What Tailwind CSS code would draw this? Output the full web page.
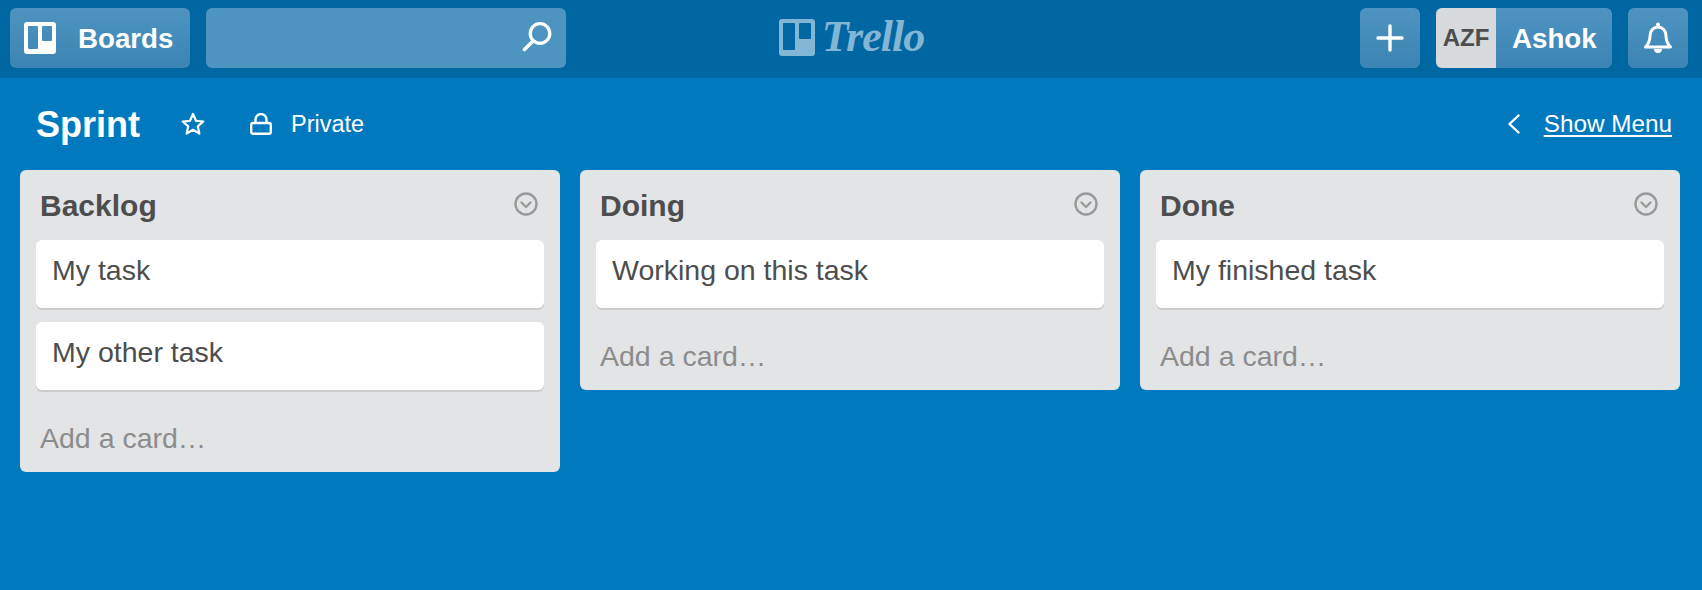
<!DOCTYPE html>
<html lang="en">
<head>
    <meta charset="UTF-8">
    <title>Sprint | Trello</title>
    <script src="https://cdn.jsdelivr.net/npm/@tailwindcss/browser@4"></script>
</head>
<body class="bg-[#0079bf] h-[590px] overflow-hidden font-['Liberation_Sans',Arial,sans-serif] text-white">

    <!-- Top bar -->
    <header class="grid grid-cols-[1fr_auto_1fr] items-start h-[78px] pt-[8px] pl-[10px] pr-[14px] bg-[#0067a3]">
        <div class="flex gap-[16px]">
            <a class="flex items-center w-[180px] h-[60px] rounded-[6px] bg-gradient-to-b from-[#4d94c1] to-[#3c84b3]">
                <svg class="ml-[14px] w-[32px] h-[32px]" viewBox="0 0 32 32">
                    <path fill="#fff" fill-rule="evenodd" d="M3 0h26a3 3 0 0 1 3 3v26a3 3 0 0 1-3 3H3a3 3 0 0 1-3-3V3a3 3 0 0 1 3-3zM5 4a1 1 0 0 0-1 1v21a1 1 0 0 0 1 1h8a1 1 0 0 0 1-1V5a1 1 0 0 0-1-1zM19 4a1 1 0 0 0-1 1v13a1 1 0 0 0 1 1h8a1 1 0 0 0 1-1V5a1 1 0 0 0-1-1z"/>
                </svg>
                <span class="ml-[22px] mt-[1px] text-[27.700px] font-bold">Boards</span>
            </a>
            <div class="flex items-center justify-end w-[360px] h-[60px] pr-[14px] rounded-[6px] bg-[#4d94c1]">
                <svg class="mb-[2px] w-[30px] h-[30px]" viewBox="0 0 30 30" fill="none" stroke="#fff">
                    <circle cx="18" cy="11.500" r="9.800" stroke-width="3.200"/>
                    <path d="M10.500 19.500l-8 8" stroke-width="3.600" stroke-linecap="round"/>
                </svg>
            </div>
        </div>

        <!-- Logo -->
        <div class="flex items-center gap-[7px] ml-[5px] mt-[-1px] h-[60px] text-[#83b5d5]">
            <svg class="w-[36px] h-[37px]" viewBox="0 0 36 37">
                <path fill="#83b5d5" fill-rule="evenodd" d="M3 0h30a3 3 0 0 1 3 3v31a3 3 0 0 1-3 3H3a3 3 0 0 1-3-3V3a3 3 0 0 1 3-3zM5 4a1 1 0 0 0-1 1v25a1 1 0 0 0 1 1h10a1 1 0 0 0 1-1V5a1 1 0 0 0-1-1zM21 4a1 1 0 0 0-1 1v14a1 1 0 0 0 1 1h10a1 1 0 0 0 1-1V5a1 1 0 0 0-1-1z"/>
            </svg>
            <span class="font-['Liberation_Serif',serif] italic font-bold text-[44px] leading-[46px] tracking-[-1px]">Trello</span>
        </div>

        <div class="flex justify-end gap-[16px]">
            <a class="flex items-center justify-center w-[60px] h-[60px] rounded-[6px] bg-gradient-to-b from-[#4d94c1] to-[#3c84b3]">
                <svg class="w-[28px] h-[28px]" viewBox="0 0 28 28" stroke="#fff" stroke-width="3.400" stroke-linecap="round">
                    <path d="M2 14h24M14 2v24"/>
                </svg>
            </a>
            <a class="flex items-center w-[176px] h-[60px] rounded-[6px] overflow-hidden bg-gradient-to-b from-[#4d94c1] to-[#3c84b3]">
                <span class="flex items-center justify-center w-[60px] h-[60px] bg-[#d6dadc] text-[#4d4d4d] text-[24px] font-bold">AZF</span>
                <span class="ml-[16px] mt-[1px] text-[27.700px] font-bold">Ashok</span>
            </a>
            <a class="flex items-center justify-center w-[60px] h-[60px] rounded-[6px] bg-gradient-to-b from-[#4d94c1] to-[#3c84b3]">
                <svg class="w-[30px] h-[32px]" viewBox="0 0 30 32" fill="none" stroke="#fff" stroke-width="3" stroke-linejoin="round">
                    <path d="M2.500 25c3-3 4.500-6 4.500-11 0-5.500 3.500-9 8-9s8 3.500 8 9c0 5 1.500 8 4.500 11z"/>
                    <circle cx="15" cy="2.500" r="2" fill="#fff" stroke="none"/>
                    <path d="M11 27a4 4 0 0 0 8 0z" fill="#fff" stroke="none"/>
                </svg>
            </a>
        </div>
    </header>

    <!-- Board title row -->
    <div class="flex items-center h-[92px] pl-[36px] pr-[30px]">
        <h1 class="mt-[2px] text-[36px] font-bold">Sprint</h1>
        <svg class="ml-[41px] w-[24px] h-[24px]" viewBox="0 0 24 24" fill="none" stroke="#fff" stroke-width="2.200" stroke-linejoin="round">
            <path d="M12 2l3 6.800 7.300.7-5.500 4.900 1.600 7.200L12 17.800l-6.400 3.800 1.600-7.200L1.700 9.500 9 8.800z"/>
        </svg>
        <svg class="ml-[45px] w-[22px] h-[22px]" viewBox="0 0 22 22" fill="none" stroke="#fff" stroke-width="2.400">
            <path d="M5.500 10V6.500a5.500 5.500 0 0 1 11 0V10"/>
            <rect x="1.200" y="10" width="19.600" height="10.800" rx="2"/>
        </svg>
        <span class="ml-[19px] mt-[2px] text-[23.500px]">Private</span>
        <svg class="ml-auto w-[12px] h-[20px]" viewBox="0 0 12 20" fill="none" stroke="#fff" stroke-width="2.400" stroke-linecap="round" stroke-linejoin="round">
            <path d="M10.500 1.500L1.500 10l9 8.500"/>
        </svg>
        <a class="ml-[24px] text-[24.300px] underline decoration-2 underline-offset-[3px]">Show Menu</a>
    </div>

    <!-- Lists -->
    <main class="flex items-start gap-[20px] px-[20px]">
        <section class="w-[540px] rounded-[6px] bg-[#e2e4e6] text-[#4d4d4d]">
            <div class="flex items-center justify-between h-[70px] pl-[20px] pr-[22px]">
                <h2 class="text-[30px] font-bold">Backlog</h2>
                <svg class="mb-[2px] w-[24px] h-[24px]" viewBox="0 0 24 24" fill="none" stroke="#999" stroke-width="2.400" stroke-linecap="round" stroke-linejoin="round">
                    <circle cx="12" cy="12" r="10.500"/>
                    <path d="M7.500 10.500l4.500 4.500 4.500-4.500"/>
                </svg>
            </div>
            <div class="flex flex-col gap-[14px] px-[16px]">
                <div class="h-[68px] pl-[16px] pt-[12px] rounded-[6px] bg-white shadow-[0_2px_0_#ccc] text-[28.500px] leading-[36px]">My task</div>
                <div class="h-[68px] pl-[16px] pt-[12px] rounded-[6px] bg-white shadow-[0_2px_0_#ccc] text-[28.500px] leading-[36px]">My other task</div>
            </div>
            <div class="h-[82px] pl-[20px] pt-[30px] text-[#8c8c8c] text-[28.500px] leading-[36px]">Add a card…</div>
        </section>

        <section class="w-[540px] rounded-[6px] bg-[#e2e4e6] text-[#4d4d4d]">
            <div class="flex items-center justify-between h-[70px] pl-[20px] pr-[22px]">
                <h2 class="text-[30px] font-bold">Doing</h2>
                <svg class="mb-[2px] w-[24px] h-[24px]" viewBox="0 0 24 24" fill="none" stroke="#999" stroke-width="2.400" stroke-linecap="round" stroke-linejoin="round">
                    <circle cx="12" cy="12" r="10.500"/>
                    <path d="M7.500 10.500l4.500 4.500 4.500-4.500"/>
                </svg>
            </div>
            <div class="flex flex-col gap-[14px] px-[16px]">
                <div class="h-[68px] pl-[16px] pt-[12px] rounded-[6px] bg-white shadow-[0_2px_0_#ccc] text-[28.500px] leading-[36px]">Working on this task</div>
            </div>
            <div class="h-[82px] pl-[20px] pt-[30px] text-[#8c8c8c] text-[28.500px] leading-[36px]">Add a card…</div>
        </section>

        <section class="w-[540px] rounded-[6px] bg-[#e2e4e6] text-[#4d4d4d]">
            <div class="flex items-center justify-between h-[70px] pl-[20px] pr-[22px]">
                <h2 class="text-[30px] font-bold">Done</h2>
                <svg class="mb-[2px] w-[24px] h-[24px]" viewBox="0 0 24 24" fill="none" stroke="#999" stroke-width="2.400" stroke-linecap="round" stroke-linejoin="round">
                    <circle cx="12" cy="12" r="10.500"/>
                    <path d="M7.500 10.500l4.500 4.500 4.500-4.500"/>
                </svg>
            </div>
            <div class="flex flex-col gap-[14px] px-[16px]">
                <div class="h-[68px] pl-[16px] pt-[12px] rounded-[6px] bg-white shadow-[0_2px_0_#ccc] text-[28.500px] leading-[36px]">My finished task</div>
            </div>
            <div class="h-[82px] pl-[20px] pt-[30px] text-[#8c8c8c] text-[28.500px] leading-[36px]">Add a card…</div>
        </section>
    </main>

</body>
</html>
